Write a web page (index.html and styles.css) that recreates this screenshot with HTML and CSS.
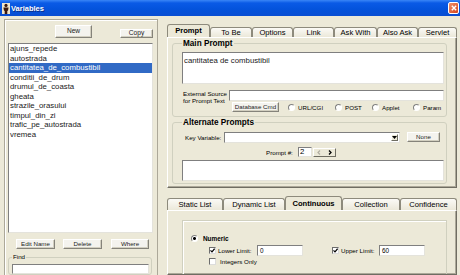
FILE: index.html
```html
<!DOCTYPE html>
<html>
  <head>
    <link rel="stylesheet" href="styles.css">
  </head>
  <body>
    <div class="window">
      <div class="titlebar">
        <svg class="app-icon" width="8" height="11" viewBox="0 0 8 11">
          <rect width="8" height="11" fill="#f1e6cc"/>
          <circle cx="4" cy="2.4" r="1.6" fill="#3b1a0e"/>
          <path d="M1.4 4.6h5.2l-.6 3.2H5.3V11H2.7V7.8H2z" fill="#3b1a0e"/>
        </svg>
        <span class="title">Variables</span>
        <span class="close-btn">
          <svg width="6" height="6" viewBox="0 0 6 6"><path d="M.8.8l4.4 4.4M5.2.8L.8 5.2" stroke="#fff" stroke-width="1.4"/></svg>
        </span>
      </div>
      <div class="main">
        <div class="left">
          <div class="left-frame">
            <div class="top-buttons">
              <button class="btn btn-new">New</button>
              <button class="btn btn-copy">Copy</button>
            </div>
            <ul class="var-list">
              <li>ajuns_repede</li>
              <li>autostrada</li>
              <li class="selected">cantitatea_de_combustibil</li>
              <li>conditii_de_drum</li>
              <li>drumul_de_coasta</li>
              <li>gheata</li>
              <li>strazile_orasului</li>
              <li>timpul_din_zi</li>
              <li>trafic_pe_autostrada</li>
              <li>vremea</li>
            </ul>
            <div class="bottom-buttons">
              <button class="btn btn-edit">Edit Name</button>
              <button class="btn btn-delete">Delete</button>
              <button class="btn btn-where">Where</button>
            </div>
            <fieldset class="find">
              <legend>Find</legend>
              <div class="field find-input"></div>
            </fieldset>
          </div>
        </div>
        <div class="right">
          <div class="tabs tabs-top">
            <div class="tab active">Prompt</div>
            <div class="tab">To Be</div>
            <div class="tab">Options</div>
            <div class="tab">Link</div>
            <div class="tab">Ask With</div>
            <div class="tab">Also Ask</div>
            <div class="tab">Servlet</div>
          </div>
          <div class="panel panel-top">
            <fieldset class="group group-main">
              <legend>Main Prompt</legend>
              <div class="field text-box">cantitatea de combustibil</div>
              <div class="ext-row">
                <div class="ext-label">External Source<br>for Prompt Text</div>
                <div class="field ext-input"></div>
              </div>
              <div class="source-row">
                <button class="btn btn-db">Database Cmd</button>
                <div class="radios">
                  <label class="radio"><span class="radio-dot"></span>URL/CGI</label>
                  <label class="radio"><span class="radio-dot"></span>POST</label>
                  <label class="radio"><span class="radio-dot"></span>Applet</label>
                  <label class="radio"><span class="radio-dot"></span>Param</label>
                </div>
              </div>
            </fieldset>
            <fieldset class="group group-alt">
              <legend>Alternate Prompts</legend>
              <div class="key-row">
                <span class="key-label">Key Variable:</span>
                <div class="field combo">
                  <span class="combo-arrow">
                    <svg width="5" height="3" viewBox="0 0 5 3"><path d="M0 0h5L2.5 3z" fill="#000"/></svg>
                  </span>
                </div>
                <button class="btn btn-none">None</button>
              </div>
              <div class="num-row">
                <span class="num-label">Prompt #:</span>
                <div class="field num-input">2</div>
                <div class="spin">
                  <span class="spin-btn">
                    <svg width="4" height="5" viewBox="0 0 4 5"><path d="M3 .5L1 2.5 3 4.5" fill="none" stroke="#b0ada0" stroke-width="1.2"/></svg>
                  </span>
                  <span class="spin-btn">
                    <svg width="4" height="5" viewBox="0 0 4 5"><path d="M1 .5l2 2-2 2" fill="none" stroke="#000" stroke-width="1.3"/></svg>
                  </span>
                </div>
              </div>
              <div class="field text-box short"></div>
            </fieldset>
          </div>
          <div class="tabs tabs-bottom">
            <div class="tab">Static List</div>
            <div class="tab">Dynamic List</div>
            <div class="tab active">Continuous</div>
            <div class="tab">Collection</div>
            <div class="tab">Confidence</div>
          </div>
          <div class="panel panel-bottom">
            <div class="inner-box">
              <div class="numeric-row">
                <span class="radio-dot checked"></span>
                <span class="numeric-label">Numeric</span>
              </div>
              <div class="limit-row">
                <span class="check">
                  <svg width="5" height="5" viewBox="0 0 5 5"><path d="M.5 2.3l1.5 1.6L4.6.7" fill="none" stroke="#000" stroke-width="1.2"/></svg>
                </span>
                <span class="limit-label">Lower Limit:</span>
                <div class="field limit-input">0</div>
                <span class="check upper">
                  <svg width="5" height="5" viewBox="0 0 5 5"><path d="M.5 2.3l1.5 1.6L4.6.7" fill="none" stroke="#000" stroke-width="1.2"/></svg>
                </span>
                <span class="limit-label">Upper Limit:</span>
                <div class="field limit-input">60</div>
              </div>
              <div class="int-row">
                <span class="check"></span>
                <span class="int-label">Integers Only</span>
              </div>
            </div>
          </div>
        </div>
      </div>
    </div>
  </body>
</html>
```

FILE: styles.css
```css
* {
  box-sizing: border-box;
}
body {
  margin: 0;
  width: 460px;
  height: 275px;
  overflow: hidden;
  background: #ece9d8;
  font-family: "Liberation Sans", Arial, sans-serif;
  font-size: 6.2px;
  color: #000;
}
.window {
  height: 275px;
  display: flex;
  flex-direction: column;
  overflow: hidden;
}

/* title bar */
.titlebar {
  height: 16px;
  flex: none;
  display: flex;
  align-items: center;
  padding: 0 1px 0 2px;
  background: linear-gradient(#3a86f6, #0a5ae6 3px, #0453dc 9px, #0a4ed2);
  color: #fff;
}
.app-icon {
  margin-right: 1px;
}
.title {
  flex: 1;
  font-size: 7.5px;
  font-weight: bold;
  text-shadow: 1px 1px #0b2f8a;
}
.close-btn {
  width: 11px;
  height: 12px;
  display: flex;
  align-items: center;
  justify-content: center;
  border: 1px solid #fff;
  border-radius: 2px;
  background: linear-gradient(135deg, #f0906a, #d4451e);
}

.main {
  flex: 1;
  display: flex;
  min-height: 0;
  overflow: hidden;
}

/* common controls */
.btn {
  display: block;
  padding: 0;
  font-family: inherit;
  font-size: 6.2px;
  line-height: 1;
  color: #222;
  background: #f4f3ee;
  border: 1px solid;
  border-color: #fff #85837a #85837a #fff;
  box-shadow: inset -1px -1px #d2cfc0;
}
.field {
  background: #fff;
  border: 1px solid;
  border-color: #7f7f7f #e4e3dc #e4e3dc #7f7f7f;
}
.radio-dot {
  display: inline-block;
  flex: none;
  width: 7px;
  height: 7px;
  border-radius: 50%;
  background: #fff;
  border: 1px solid;
  border-color: #808080 #fff #fff #808080;
}
.radio-dot.checked {
  background: radial-gradient(circle, #000 1.2px, #fff 1.7px);
}
.check {
  flex: none;
  width: 7px;
  height: 7px;
  display: flex;
  align-items: center;
  justify-content: center;
  background: #fff;
  border: 1px solid;
  border-color: #6d6d6d #dcdcdc #dcdcdc #6d6d6d;
}

/* left column */
.left {
  width: 160px;
  flex: none;
  padding: 3px 2px 0 4px;
}
.left-frame {
  height: 100%;
  border: 1px solid #aca899;
  border-bottom: none;
  box-shadow: inset 1px 1px #fff;
}
.top-buttons {
  display: flex;
  align-items: flex-end;
  height: 13px;
  margin-top: 5px;
}
.btn-new {
  margin-left: 50px;
  width: 37px;
  height: 13px;
  font-size: 6.6px;
}
.btn-copy {
  margin-left: 28px;
  width: 33px;
  height: 9px;
  font-size: 6.6px;
}
.var-list {
  list-style: none;
  margin: 5px 0 0 3px;
  padding: 0;
  width: 145px;
  height: 190px;
  background: #fff;
  border: 1px solid;
  border-color: #7f7f7f #e4e3dc #e4e3dc #7f7f7f;
  font-size: 7.8px;
  color: #1a1a1a;
}
.var-list li {
  height: 9.5px;
  line-height: 9.5px;
  padding-left: 1px;
  white-space: nowrap;
}
.var-list .selected {
  background: #316ac5;
  color: #fff;
}
.bottom-buttons {
  display: flex;
  height: 10px;
  margin-top: 6px;
}
.btn-edit {
  margin-left: 11px;
  width: 39px;
}
.btn-delete {
  margin-left: 8px;
  width: 39px;
}
.btn-where {
  margin-left: 9px;
  width: 38px;
}
.find {
  margin: 4px 0 0 3px;
  width: 144px;
  padding: 0 0 0 3px;
  border: 1px solid #d0d0bf;
  border-radius: 3px;
}
.find legend {
  padding: 0 1px;
  line-height: 8px;
}
.find-input {
  margin-top: 3px;
  width: 137px;
  height: 10px;
}

/* right column */
.right {
  flex: 1;
  min-width: 0;
  display: flex;
  flex-direction: column;
  padding: 8px 3px 0 7px;
}
.tabs {
  display: grid;
  align-items: end;
  flex: none;
}
.tabs-top {
  height: 13px;
  grid-template-columns: 43px 42px 41px 41px 43px 41px 39px;
}
.tabs-bottom {
  height: 14px;
  margin-top: 8px;
  grid-template-columns: 56px 62px 57px 58px 57px;
}
.tab {
  height: 10px;
  border: 1px solid #8d8a7c;
  border-bottom: none;
  border-radius: 3px 3px 0 0;
  background: linear-gradient(#fbfaf6, #ebe8d9);
  font-size: 7.6px;
  line-height: 10px;
  text-align: center;
  white-space: nowrap;
}
.tabs-bottom .tab {
  height: 12px;
  line-height: 11px;
}
.tab.active {
  height: 13px;
  line-height: 12px;
  background: #ece9d8;
  font-weight: bold;
}
.tabs-bottom .tab.active {
  height: 14px;
  line-height: 13px;
}
.panel {
  border: 1px solid;
  border-color: #fff #6f6d62 #6f6d62 #fff;
  box-shadow: inset -1px -1px #aca899;
}
.panel-top {
  flex: none;
  height: 151px;
  padding-left: 4px;
}
.panel-bottom {
  flex: 1;
  min-height: 0;
  overflow: hidden;
  padding: 9px 0 0 14px;
}

/* group boxes */
.group {
  margin: 1px 0 0;
  width: 275px;
  padding: 0 2px 2px 9px;
  border: 1px solid #d0d0bf;
  border-radius: 3px;
}
.group legend {
  padding: 0 1px;
  font-size: 8.2px;
  font-weight: bold;
  line-height: 9px;
}
.group-main {
  padding-bottom: 4px;
}
.text-box {
  margin-top: 4px;
  width: 262px;
  height: 32px;
  padding: 3px 1px;
  font-size: 7.8px;
  line-height: 9px;
  color: #1a1a1a;
}
.text-box.short {
  margin-top: 3px;
  height: 21px;
}
.ext-row {
  display: flex;
  height: 11px;
  margin-top: 6px;
}
.ext-label {
  width: 47px;
  padding-left: 1px;
  line-height: 7px;
  white-space: nowrap;
}
.ext-input {
  width: 215px;
  height: 11px;
}
.source-row {
  display: flex;
  align-items: center;
  height: 10px;
  margin-top: 1px;
}
.btn-db {
  margin-left: 50px;
  width: 47px;
  height: 10px;
}
.radios {
  display: grid;
  grid-template-columns: 47px 37px 41px 30px;
  margin-left: 9px;
}
.radio {
  display: flex;
  align-items: center;
  gap: 3px;
  white-space: nowrap;
}
.key-row {
  display: flex;
  align-items: center;
  height: 12px;
  margin-top: 4px;
}
.key-label {
  margin-left: 3px;
  width: 39px;
  white-space: nowrap;
}
.combo {
  width: 176px;
  height: 11px;
  display: flex;
  justify-content: flex-end;
  padding: 1px;
}
.combo-arrow {
  width: 7px;
  display: flex;
  align-items: center;
  justify-content: center;
  background: #ece9d8;
  border: 1px solid;
  border-color: #fff #6f6d62 #6f6d62 #fff;
}
.btn-none {
  margin-left: 7px;
  width: 33px;
  height: 10px;
}
.num-row {
  display: flex;
  align-items: center;
  height: 10px;
  margin-top: 4px;
}
.num-label {
  margin-left: 84px;
  width: 32px;
  white-space: nowrap;
}
.num-input {
  width: 14px;
  height: 10px;
  padding-left: 1px;
  font-size: 7.8px;
  line-height: 8px;
}
.spin {
  display: flex;
  margin-left: 1px;
  width: 23px;
  height: 9px;
  background: #ece9d8;
  border: 1px solid;
  border-color: #fff #6f6d62 #6f6d62 #fff;
}
.spin-btn {
  flex: 1;
  display: flex;
  align-items: center;
  justify-content: center;
}

/* continuous tab */
.inner-box {
  width: 265px;
  height: 55px;
  border: 1px solid #d0d0bf;
  border-bottom: none;
  box-shadow: inset 1px 1px #fff;
}
.numeric-row {
  display: flex;
  align-items: center;
  gap: 5px;
  height: 8px;
  margin-top: 13px;
  padding-left: 8px;
}
.numeric-label {
  font-size: 6.4px;
  font-weight: bold;
}
.limit-row {
  display: flex;
  align-items: center;
  height: 11px;
  margin-top: 3px;
  padding-left: 26px;
}
.limit-label {
  margin-left: 2px;
  width: 39px;
  white-space: nowrap;
}
.limit-row .limit-label + .field + .check {
  margin-left: 29px;
}
.check.upper + .limit-label {
  width: 38px;
}
.limit-input {
  width: 46px;
  height: 11px;
  padding-left: 2px;
  font-size: 6.4px;
  line-height: 9px;
}
.int-row {
  display: flex;
  align-items: center;
  gap: 4px;
  height: 7px;
  margin-top: 2px;
  padding-left: 26px;
}
```
